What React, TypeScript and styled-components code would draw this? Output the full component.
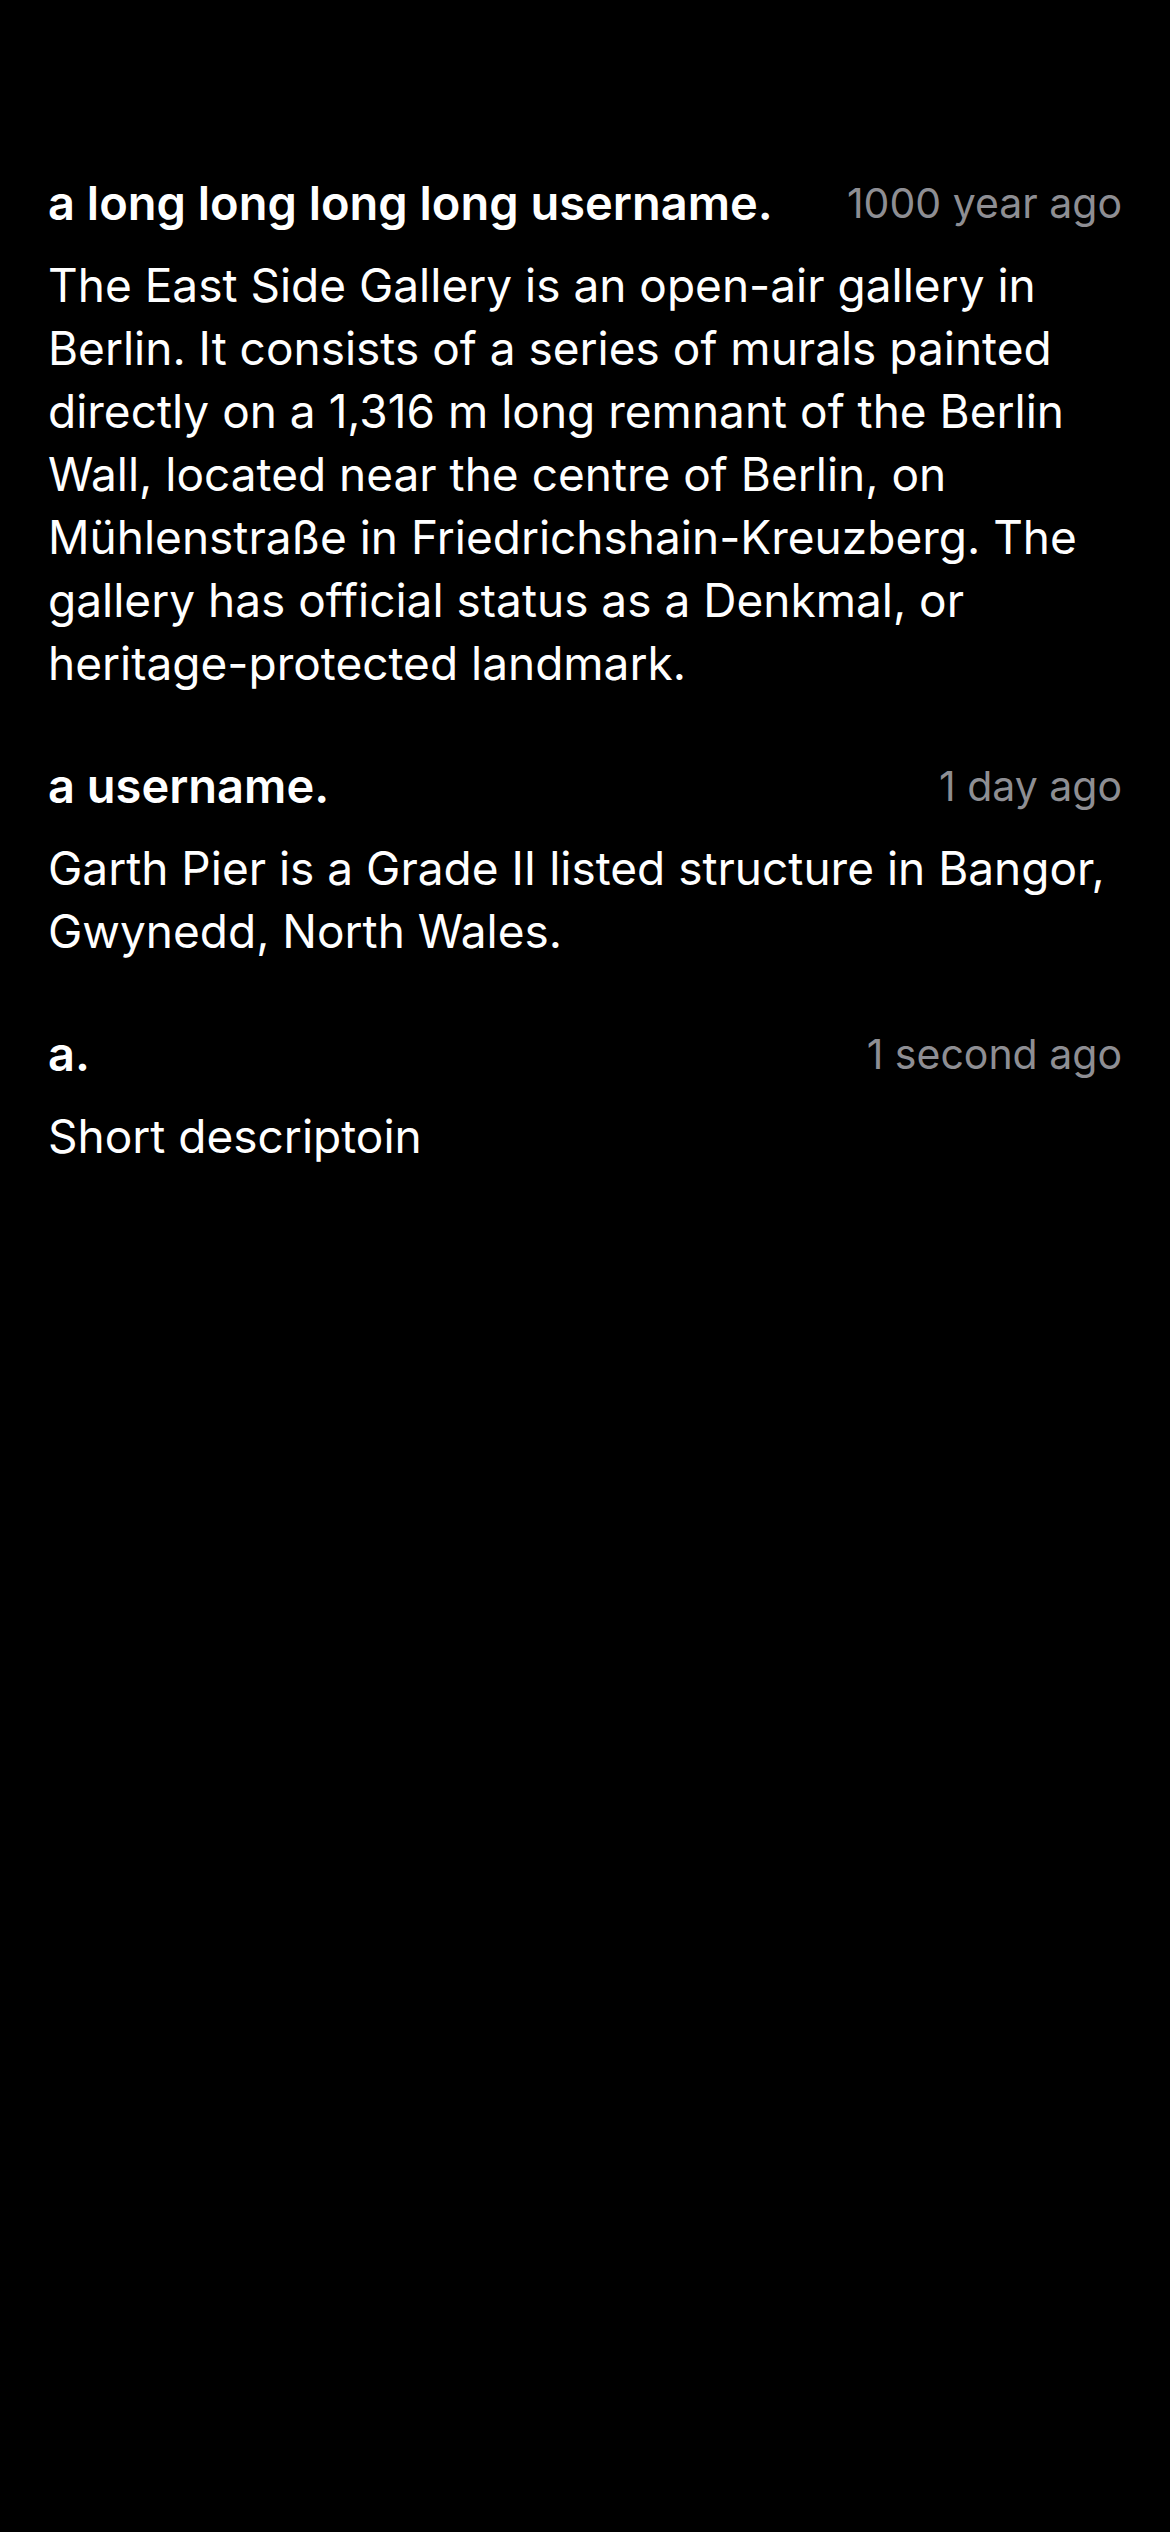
import React from "react";
import styled, { createGlobalStyle } from "styled-components";

const GlobalStyle = createGlobalStyle`
  html, body {
    margin: 0;
    padding: 0;
    background: #000000;
  }
  body {
    font-family: Inter, "Noto Sans", "Liberation Sans", sans-serif;
    -webkit-font-smoothing: antialiased;
  }
`;

const Screen = styled.main`
  width: 1170px;
  min-height: 2532px;
  background: #000000;
  box-sizing: border-box;
  padding: 173px 48px 0 48px;
  display: flex;
  flex-direction: column;
  gap: 61px;
`;

const CommentItem = styled.article`
  display: flex;
  flex-direction: column;
  gap: 21px;
`;

const Header = styled.header`
  display: flex;
  align-items: center;
  justify-content: space-between;
  gap: 48px;
  height: 60px;
`;

const Username = styled.span`
  color: #ffffff;
  font-size: 47px;
  font-weight: 600;
  line-height: 60px;
  letter-spacing: 0;
  white-space: nowrap;
  overflow: hidden;
  text-overflow: ellipsis;
  min-width: 0;
`;

const Timestamp = styled.span`
  color: #8e8e93;
  font-size: 41px;
  font-weight: 400;
  line-height: 60px;
  letter-spacing: 0;
  flex-shrink: 0;
  white-space: nowrap;
`;

const Body = styled.p`
  margin: 0;
  color: #ffffff;
  font-size: 46px;
  font-weight: 400;
  line-height: 63px;
  letter-spacing: 0;
`;

type Comment = { user: string; time: string; text: string };

const comments: Comment[] = [
  {
    user: "a long long long long username.",
    time: "1000 year ago",
    text:
      "The East Side Gallery is an open-air gallery in Berlin. It consists of a series of murals painted directly on a 1,316 m long remnant of the Berlin Wall, located near the centre of Berlin, on Mühlenstraße in Friedrichshain-Kreuzberg. The gallery has official status as a Denkmal, or heritage-protected landmark.",
  },
  {
    user: "a username.",
    time: "1 day ago",
    text: "Garth Pier is a Grade II listed structure in Bangor, Gwynedd, North Wales.",
  },
  {
    user: "a.",
    time: "1 second ago",
    text: "Short descriptoin",
  },
];

export default function App() {
  return (
    <>
      <GlobalStyle />
      <Screen>
        {comments.map((c) => (
          <CommentItem key={c.user}>
            <Header>
              <Username>{c.user}</Username>
              <Timestamp>{c.time}</Timestamp>
            </Header>
            <Body>{c.text}</Body>
          </CommentItem>
        ))}
      </Screen>
    </>
  );
}
